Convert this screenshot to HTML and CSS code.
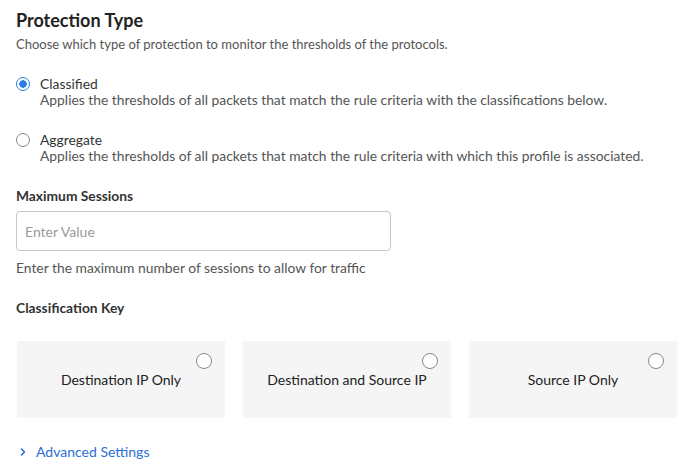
FILE: index.html
```html
<!DOCTYPE html>
<html lang="en">

<head>
  <meta charset="UTF-8">
  <meta name="viewport" content="width=device-width, initial-scale=1.0">
  <title>Protection Type</title>
  <link rel="stylesheet" href="styles.css">
</head>

<body>
  <div class="form">
    <h1>Protection Type</h1>
    <p class="hint">Choose which type of protection to monitor the thresholds of the protocols.</p>

    <div class="radio-group">
      <label class="radio-option">
        <span class="radio checked"></span>
        <span class="radio-text">
          <span class="radio-title">Classified</span>
          <span class="radio-desc">Applies the thresholds of all packets that match the rule criteria with the classifications below.</span>
        </span>
      </label>
      <label class="radio-option">
        <span class="radio"></span>
        <span class="radio-text">
          <span class="radio-title">Aggregate</span>
          <span class="radio-desc">Applies the thresholds of all packets that match the rule criteria with which this profile is associated.</span>
        </span>
      </label>
    </div>

    <label class="field-label" for="max-sessions">Maximum Sessions</label>
    <input type="text" id="max-sessions" class="text-input" placeholder="Enter Value">
    <p class="help">Enter the maximum number of sessions to allow for traffic</p>

    <div class="field-label">Classification Key</div>
    <div class="cards">
      <div class="card"><span class="radio"></span>Destination IP Only</div>
      <div class="card"><span class="radio"></span>Destination and Source IP</div>
      <div class="card"><span class="radio"></span>Source IP Only</div>
    </div>

    <a class="advanced" href="#">
      <svg width="10" height="10" viewBox="0 0 10 10"><path d="M3.5 2 L6.5 5 L3.5 8" fill="none" stroke="currentColor" stroke-width="1.6" stroke-linecap="round" stroke-linejoin="round"/></svg>
      Advanced Settings
    </a>
  </div>
</body>

</html>
```

FILE: styles.css
```css
body {
  font-family: Lato, 'Liberation Sans', sans-serif;
  margin: 0;
  padding: 8px 18px 0 16px;
  color: #333;
  background: #fff;
  font-size: 14px;
  line-height: 16px;
}

h1 {
  font-size: 18px;
  line-height: 24px;
  font-weight: 700;
  color: #222;
  margin: 0;
}

.hint {
  margin: 4px 0 0;
  font-size: 13px;
  color: #555;
}

.radio-group {
  margin-top: 24px;
  display: flex;
  flex-direction: column;
  gap: 24px;
}

.radio-option {
  display: flex;
  gap: 10px;
  cursor: pointer;
}

.radio {
  width: 14px;
  height: 14px;
  box-sizing: border-box;
  border: 1px solid #888;
  border-radius: 50%;
  background: #fff;
  flex: none;
  margin-top: 1px;
}

.radio.checked {
  border: 1.5px solid #2d7be5;
  background: radial-gradient(circle, #2d7be5 0 3.5px, #fff 4px);
}

.radio-text {
  display: flex;
  flex-direction: column;
}

.radio-title {
  color: #333;
  font-size: 13.85px;
}

.radio-desc {
  color: #555;
  font-size: 13.85px;
}

.field-label {
  display: block;
  margin-top: 24px;
  font-weight: 700;
  font-size: 13.8px;
  color: #333;
}

.text-input {
  display: block;
  width: 375px;
  height: 40px;
  box-sizing: border-box;
  margin-top: 7px;
  padding: 0 8px;
  border: 1px solid #c6c6c6;
  border-radius: 4px;
  font-family: inherit;
  font-size: 14px;
  color: #333;
}

.text-input::placeholder {
  color: #9a9a9a;
}

.help {
  margin: 9px 0 0;
  font-size: 13.85px;
  color: #555;
}

.cards {
  margin: 25px 0 0 1px;
  display: grid;
  grid-template-columns: repeat(3, 1fr);
  gap: 18px;
}

.card {
  position: relative;
  height: 77px;
  background: #f5f5f5;
  display: flex;
  align-items: center;
  justify-content: center;
  font-size: 14px;
  color: #222;
}

.card .radio {
  position: absolute;
  top: 12px;
  right: 13px;
  width: 16px;
  height: 16px;
  margin: 0;
}

.advanced {
  display: inline-flex;
  align-items: center;
  gap: 8px;
  margin-top: 26px;
  margin-left: 2px;
  color: #2a6fd6;
  text-decoration: none;
}
```
